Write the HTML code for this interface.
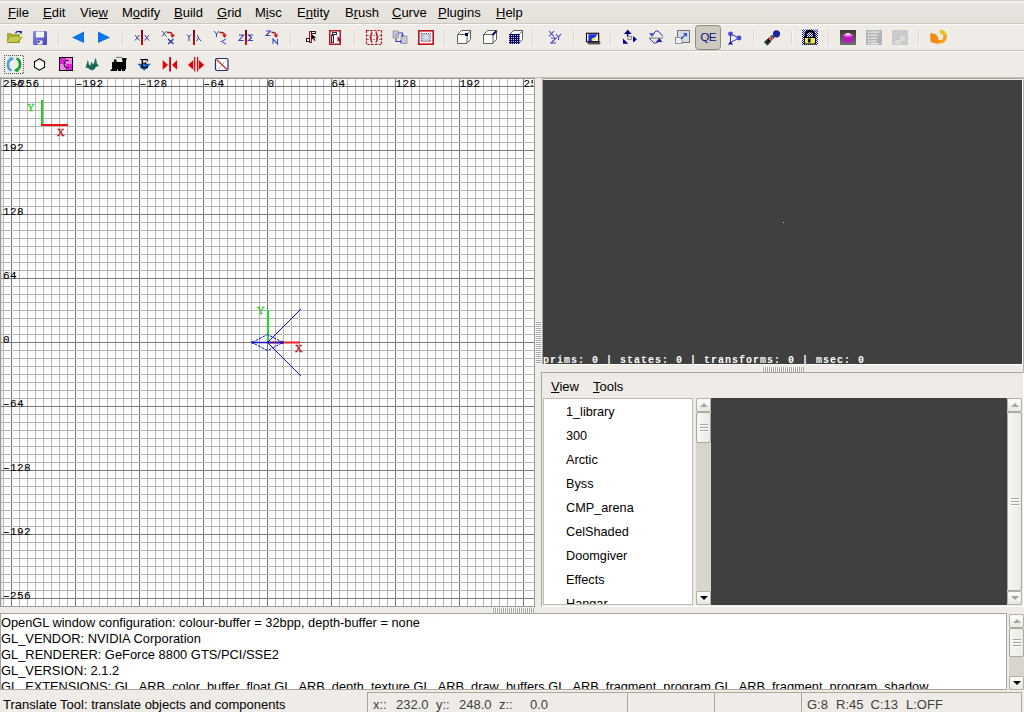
<!DOCTYPE html>
<html><head><meta charset="utf-8">
<style>
*{margin:0;padding:0;box-sizing:border-box}
html,body{width:1024px;height:712px;overflow:hidden;background:#efece8;font-family:"Liberation Sans",sans-serif;font-size:13px;color:#000}
.a{position:absolute}
.gl{position:absolute;font-family:"Liberation Mono",monospace;-webkit-text-stroke:0.1px #000;font-size:11px;letter-spacing:0.4px;line-height:10px;color:#000;white-space:pre}
.mi{position:absolute;top:5px;font-size:13px;line-height:16px;white-space:pre}
.u{text-decoration:underline}
.sep{position:absolute;top:30px;width:1px;height:15px;background:#c9c5bb;border-right:1px solid #fff}
.tl{position:absolute;left:566px;font-size:12.7px;line-height:16px}
.cl{position:absolute;left:0px;font-size:12.9px;line-height:16px;white-space:pre}
.sb{position:absolute;background:linear-gradient(#fdfdfb,#e9e7e1);border:1px solid #b3b0a8;border-radius:2px}
.sl{position:absolute;background:linear-gradient(90deg,#f7f6f2,#ebe9e3);border:1px solid #a9a69e;border-radius:2px}
.st{position:absolute;top:698px;font-size:13px;line-height:14px;white-space:pre;color:#404040}
</style></head><body>
<!-- menubar -->
<div class="a" style="left:0;top:0;width:1024px;height:23px;background:linear-gradient(#e9e6e1,#e4e1db)"></div>
<div class="a" style="left:0;top:0;width:1024px;height:1px;background:#d6d3cc"></div>
<div class="a" style="left:0;top:1px;width:1024px;height:2px;background:#f3f1ed"></div>
<div class="a" style="left:0;top:23px;width:1024px;height:1px;background:#cdc9c2"></div>
<div class="a" style="left:0;top:24px;width:1024px;height:1px;background:#fcfbf9"></div>
<div class="mi" style="left:8px"><span class="u">F</span>ile</div>
<div class="mi" style="left:43px"><span class="u">E</span>dit</div>
<div class="mi" style="left:80px">Vie<span class="u">w</span></div>
<div class="mi" style="left:122px">M<span class="u">o</span>dify</div>
<div class="mi" style="left:174px"><span class="u">B</span>uild</div>
<div class="mi" style="left:217px"><span class="u">G</span>rid</div>
<div class="mi" style="left:255px">M<span class="u">i</span>sc</div>
<div class="mi" style="left:297px">E<span class="u">n</span>tity</div>
<div class="mi" style="left:345px">B<span class="u">r</span>ush</div>
<div class="mi" style="left:392px"><span class="u">C</span>urve</div>
<div class="mi" style="left:438px"><span class="u">P</span>lugins</div>
<div class="mi" style="left:496px"><span class="u">H</span>elp</div>
<!-- toolbar lines -->
<div class="a" style="left:0;top:50px;width:1024px;height:1px;background:#c4c1ba"></div>
<div class="a" style="left:0;top:51px;width:1024px;height:1px;background:#fcfbf9"></div>
<div class="a" style="left:0;top:77px;width:1024px;height:1px;background:#c4c1b9"></div>
<!-- GRID -->
<div class="a" style="left:0;top:78px;width:535px;height:529px;background:#fff;border:1px solid #999"></div>
<div class="a" style="left:1px;top:79px;width:1px;height:527px;background:#dcdcdc"></div>
<svg class="a" style="left:0;top:0" width="1024" height="712" viewBox="0 0 1024 712" shape-rendering="crispEdges">
<rect x="3" y="79" width="1" height="527" fill="#b6b6b6"/>
<rect x="11" y="79" width="1" height="527" fill="#7a7a7a"/>
<rect x="19" y="79" width="1" height="527" fill="#b6b6b6"/>
<rect x="27" y="79" width="1" height="527" fill="#b6b6b6"/>
<rect x="35" y="79" width="1" height="527" fill="#b6b6b6"/>
<rect x="43" y="79" width="1" height="527" fill="#b6b6b6"/>
<rect x="51" y="79" width="1" height="527" fill="#b6b6b6"/>
<rect x="59" y="79" width="1" height="527" fill="#b6b6b6"/>
<rect x="67" y="79" width="1" height="527" fill="#b6b6b6"/>
<rect x="75" y="79" width="1" height="527" fill="#7a7a7a"/>
<rect x="83" y="79" width="1" height="527" fill="#b6b6b6"/>
<rect x="91" y="79" width="1" height="527" fill="#b6b6b6"/>
<rect x="99" y="79" width="1" height="527" fill="#b6b6b6"/>
<rect x="107" y="79" width="1" height="527" fill="#b6b6b6"/>
<rect x="115" y="79" width="1" height="527" fill="#b6b6b6"/>
<rect x="123" y="79" width="1" height="527" fill="#b6b6b6"/>
<rect x="131" y="79" width="1" height="527" fill="#b6b6b6"/>
<rect x="139" y="79" width="1" height="527" fill="#7a7a7a"/>
<rect x="147" y="79" width="1" height="527" fill="#b6b6b6"/>
<rect x="155" y="79" width="1" height="527" fill="#b6b6b6"/>
<rect x="163" y="79" width="1" height="527" fill="#b6b6b6"/>
<rect x="171" y="79" width="1" height="527" fill="#b6b6b6"/>
<rect x="179" y="79" width="1" height="527" fill="#b6b6b6"/>
<rect x="187" y="79" width="1" height="527" fill="#b6b6b6"/>
<rect x="195" y="79" width="1" height="527" fill="#b6b6b6"/>
<rect x="203" y="79" width="1" height="527" fill="#7a7a7a"/>
<rect x="211" y="79" width="1" height="527" fill="#b6b6b6"/>
<rect x="219" y="79" width="1" height="527" fill="#b6b6b6"/>
<rect x="227" y="79" width="1" height="527" fill="#b6b6b6"/>
<rect x="235" y="79" width="1" height="527" fill="#b6b6b6"/>
<rect x="243" y="79" width="1" height="527" fill="#b6b6b6"/>
<rect x="251" y="79" width="1" height="527" fill="#b6b6b6"/>
<rect x="259" y="79" width="1" height="527" fill="#b6b6b6"/>
<rect x="267" y="79" width="1" height="527" fill="#7a7a7a"/>
<rect x="275" y="79" width="1" height="527" fill="#b6b6b6"/>
<rect x="283" y="79" width="1" height="527" fill="#b6b6b6"/>
<rect x="291" y="79" width="1" height="527" fill="#b6b6b6"/>
<rect x="299" y="79" width="1" height="527" fill="#b6b6b6"/>
<rect x="307" y="79" width="1" height="527" fill="#b6b6b6"/>
<rect x="315" y="79" width="1" height="527" fill="#b6b6b6"/>
<rect x="323" y="79" width="1" height="527" fill="#b6b6b6"/>
<rect x="331" y="79" width="1" height="527" fill="#7a7a7a"/>
<rect x="339" y="79" width="1" height="527" fill="#b6b6b6"/>
<rect x="347" y="79" width="1" height="527" fill="#b6b6b6"/>
<rect x="355" y="79" width="1" height="527" fill="#b6b6b6"/>
<rect x="363" y="79" width="1" height="527" fill="#b6b6b6"/>
<rect x="371" y="79" width="1" height="527" fill="#b6b6b6"/>
<rect x="379" y="79" width="1" height="527" fill="#b6b6b6"/>
<rect x="387" y="79" width="1" height="527" fill="#b6b6b6"/>
<rect x="395" y="79" width="1" height="527" fill="#7a7a7a"/>
<rect x="403" y="79" width="1" height="527" fill="#b6b6b6"/>
<rect x="411" y="79" width="1" height="527" fill="#b6b6b6"/>
<rect x="419" y="79" width="1" height="527" fill="#b6b6b6"/>
<rect x="427" y="79" width="1" height="527" fill="#b6b6b6"/>
<rect x="435" y="79" width="1" height="527" fill="#b6b6b6"/>
<rect x="443" y="79" width="1" height="527" fill="#b6b6b6"/>
<rect x="451" y="79" width="1" height="527" fill="#b6b6b6"/>
<rect x="459" y="79" width="1" height="527" fill="#7a7a7a"/>
<rect x="467" y="79" width="1" height="527" fill="#b6b6b6"/>
<rect x="475" y="79" width="1" height="527" fill="#b6b6b6"/>
<rect x="483" y="79" width="1" height="527" fill="#b6b6b6"/>
<rect x="491" y="79" width="1" height="527" fill="#b6b6b6"/>
<rect x="499" y="79" width="1" height="527" fill="#b6b6b6"/>
<rect x="507" y="79" width="1" height="527" fill="#b6b6b6"/>
<rect x="515" y="79" width="1" height="527" fill="#b6b6b6"/>
<rect x="523" y="79" width="1" height="527" fill="#7a7a7a"/>
<rect x="1" y="86" width="533" height="1" fill="#7a7a7a"/>
<rect x="1" y="94" width="533" height="1" fill="#b6b6b6"/>
<rect x="1" y="102" width="533" height="1" fill="#b6b6b6"/>
<rect x="1" y="110" width="533" height="1" fill="#b6b6b6"/>
<rect x="1" y="118" width="533" height="1" fill="#b6b6b6"/>
<rect x="1" y="126" width="533" height="1" fill="#b6b6b6"/>
<rect x="1" y="134" width="533" height="1" fill="#b6b6b6"/>
<rect x="1" y="142" width="533" height="1" fill="#b6b6b6"/>
<rect x="1" y="150" width="533" height="1" fill="#7a7a7a"/>
<rect x="1" y="158" width="533" height="1" fill="#b6b6b6"/>
<rect x="1" y="166" width="533" height="1" fill="#b6b6b6"/>
<rect x="1" y="174" width="533" height="1" fill="#b6b6b6"/>
<rect x="1" y="182" width="533" height="1" fill="#b6b6b6"/>
<rect x="1" y="190" width="533" height="1" fill="#b6b6b6"/>
<rect x="1" y="198" width="533" height="1" fill="#b6b6b6"/>
<rect x="1" y="206" width="533" height="1" fill="#b6b6b6"/>
<rect x="1" y="214" width="533" height="1" fill="#7a7a7a"/>
<rect x="1" y="222" width="533" height="1" fill="#b6b6b6"/>
<rect x="1" y="230" width="533" height="1" fill="#b6b6b6"/>
<rect x="1" y="238" width="533" height="1" fill="#b6b6b6"/>
<rect x="1" y="246" width="533" height="1" fill="#b6b6b6"/>
<rect x="1" y="254" width="533" height="1" fill="#b6b6b6"/>
<rect x="1" y="262" width="533" height="1" fill="#b6b6b6"/>
<rect x="1" y="270" width="533" height="1" fill="#b6b6b6"/>
<rect x="1" y="278" width="533" height="1" fill="#7a7a7a"/>
<rect x="1" y="286" width="533" height="1" fill="#b6b6b6"/>
<rect x="1" y="294" width="533" height="1" fill="#b6b6b6"/>
<rect x="1" y="302" width="533" height="1" fill="#b6b6b6"/>
<rect x="1" y="310" width="533" height="1" fill="#b6b6b6"/>
<rect x="1" y="318" width="533" height="1" fill="#b6b6b6"/>
<rect x="1" y="326" width="533" height="1" fill="#b6b6b6"/>
<rect x="1" y="334" width="533" height="1" fill="#b6b6b6"/>
<rect x="1" y="342" width="533" height="1" fill="#7a7a7a"/>
<rect x="1" y="350" width="533" height="1" fill="#b6b6b6"/>
<rect x="1" y="358" width="533" height="1" fill="#b6b6b6"/>
<rect x="1" y="366" width="533" height="1" fill="#b6b6b6"/>
<rect x="1" y="374" width="533" height="1" fill="#b6b6b6"/>
<rect x="1" y="382" width="533" height="1" fill="#b6b6b6"/>
<rect x="1" y="390" width="533" height="1" fill="#b6b6b6"/>
<rect x="1" y="398" width="533" height="1" fill="#b6b6b6"/>
<rect x="1" y="406" width="533" height="1" fill="#7a7a7a"/>
<rect x="1" y="414" width="533" height="1" fill="#b6b6b6"/>
<rect x="1" y="422" width="533" height="1" fill="#b6b6b6"/>
<rect x="1" y="430" width="533" height="1" fill="#b6b6b6"/>
<rect x="1" y="438" width="533" height="1" fill="#b6b6b6"/>
<rect x="1" y="446" width="533" height="1" fill="#b6b6b6"/>
<rect x="1" y="454" width="533" height="1" fill="#b6b6b6"/>
<rect x="1" y="462" width="533" height="1" fill="#b6b6b6"/>
<rect x="1" y="470" width="533" height="1" fill="#7a7a7a"/>
<rect x="1" y="478" width="533" height="1" fill="#b6b6b6"/>
<rect x="1" y="486" width="533" height="1" fill="#b6b6b6"/>
<rect x="1" y="494" width="533" height="1" fill="#b6b6b6"/>
<rect x="1" y="502" width="533" height="1" fill="#b6b6b6"/>
<rect x="1" y="510" width="533" height="1" fill="#b6b6b6"/>
<rect x="1" y="518" width="533" height="1" fill="#b6b6b6"/>
<rect x="1" y="526" width="533" height="1" fill="#b6b6b6"/>
<rect x="1" y="534" width="533" height="1" fill="#7a7a7a"/>
<rect x="1" y="542" width="533" height="1" fill="#b6b6b6"/>
<rect x="1" y="550" width="533" height="1" fill="#b6b6b6"/>
<rect x="1" y="558" width="533" height="1" fill="#b6b6b6"/>
<rect x="1" y="566" width="533" height="1" fill="#b6b6b6"/>
<rect x="1" y="574" width="533" height="1" fill="#b6b6b6"/>
<rect x="1" y="582" width="533" height="1" fill="#b6b6b6"/>
<rect x="1" y="590" width="533" height="1" fill="#b6b6b6"/>
<rect x="1" y="598" width="533" height="1" fill="#7a7a7a"/>
</svg>
<div class="a" style="left:0;top:0;width:533px;height:606px;overflow:hidden">
<div class="gl" style="left:11.5px;top:79px">–256</div>
<div class="gl" style="left:75.5px;top:79px">–192</div>
<div class="gl" style="left:139.5px;top:79px">–128</div>
<div class="gl" style="left:203.5px;top:79px">–64</div>
<div class="gl" style="left:267.5px;top:79px">0</div>
<div class="gl" style="left:331.5px;top:79px">64</div>
<div class="gl" style="left:395.5px;top:79px">128</div>
<div class="gl" style="left:459.5px;top:79px">192</div>
<div class="gl" style="left:523.5px;top:79px">256</div>
<div class="gl" style="left:3px;top:79px">256</div>
<div class="gl" style="left:3px;top:143px">192</div>
<div class="gl" style="left:3px;top:207px">128</div>
<div class="gl" style="left:3px;top:271px">64</div>
<div class="gl" style="left:3px;top:335px">0</div>
<div class="gl" style="left:3px;top:399px">–64</div>
<div class="gl" style="left:3px;top:463px">–128</div>
<div class="gl" style="left:3px;top:527px">–192</div>
<div class="gl" style="left:3px;top:591px">–256</div>
<svg class="a" style="left:0;top:0" width="535" height="607" viewBox="0 0 535 607">
<rect x="41" y="100" width="2" height="25" fill="#22cc22"/>
<rect x="41" y="124" width="27" height="2" fill="#ee1111"/>
<rect x="267" y="310" width="2" height="32" fill="#22dd22"/>
<rect x="267" y="341.5" width="33" height="2" fill="#ee2222"/>
<g fill="none" stroke="#1010d0" stroke-width="1">
<path d="M252 342.5 L267.5 334.5 L283 342.5 L267.5 350.5 Z" stroke-dasharray="3 1"/>
<path d="M267.5 342.5 L301 309 M267.5 342.5 L301 376"/>
</g>
<path d="M252 342.5 L283 342.5" stroke="#1010c0" stroke-width="1.5"/>
<circle cx="252.5" cy="342.5" r="1.3" fill="#1010c0"/>
<circle cx="282.5" cy="342.5" r="1.3" fill="#1010c0"/>
</svg>
<div class="gl" style="left:27px;top:103px;color:#22cc22;font-family:'Liberation Serif',serif;font-size:10.5px;-webkit-text-stroke:0.3px currentColor">Y</div>
<div class="gl" style="left:57px;top:128px;color:#c01010;font-family:'Liberation Serif',serif;font-size:10.5px;-webkit-text-stroke:0.3px currentColor">X</div>
<div class="gl" style="left:257px;top:306px;color:#22cc22;font-family:'Liberation Serif',serif;font-size:10.5px;-webkit-text-stroke:0.3px currentColor">Y</div>
<div class="gl" style="left:295px;top:344px;color:#c01010;font-family:'Liberation Serif',serif;font-size:10.5px;-webkit-text-stroke:0.3px currentColor">X</div>

</div>
<!-- 3D view -->
<div class="a" style="left:542px;top:78px;width:481px;height:287px;border-top:1px solid #a8a59d;border-left:1px solid #a8a59d;border-right:1px solid #fff;border-bottom:1px solid #fff"></div>
<div class="a" style="left:543px;top:80px;width:479px;height:284px;background:#404040"></div>

<svg class="a" style="left:0;top:0" width="1024" height="80" viewBox="0 0 1024 80">
<defs>
<linearGradient id="rb" x1="0" y1="0" x2="0" y2="1"><stop offset="0" stop-color="#700010"/><stop offset="1" stop-color="#d01010"/></linearGradient>
<linearGradient id="fl" x1="0" y1="0" x2="1" y2="1"><stop offset="0" stop-color="#8c8ce8"/><stop offset="1" stop-color="#4646b0"/></linearGradient>
<linearGradient id="mon" x1="0" y1="0" x2="1" y2="1"><stop offset="0" stop-color="#1030e0"/><stop offset="0.55" stop-color="#3050e8"/><stop offset="0.6" stop-color="#f0f040"/><stop offset="1" stop-color="#f0f0e0"/></linearGradient>
<linearGradient id="pur" x1="0" y1="0" x2="0" y2="1"><stop offset="0" stop-color="#3a3a3a"/><stop offset="1" stop-color="#707070"/></linearGradient>
<pattern id="chk" width="2" height="2" patternUnits="userSpaceOnUse"><rect width="2" height="2" fill="#fff"/><rect width="1" height="1" fill="#1010c0"/><rect x="1" y="1" width="1" height="1" fill="#1010c0"/></pattern>
<pattern id="dots" width="2" height="2" patternUnits="userSpaceOnUse"><rect width="2" height="2" fill="#000060"/><rect x="1" y="1" width="1" height="1" fill="#d0d0ff"/></pattern>
</defs>
<!-- open folder -->
<path d="M7 33 h4 l1 1 h7 v2 h-12 z" fill="#b0b040"/>
<path d="M7 34 h13 v9 h-13 z" fill="#a8a838"/>
<path d="M10 37 h12 l-4 6 h-11 z" fill="#c8c850"/>
<path d="M7.5 42.5 h10.5 l4 -6" fill="none" stroke="#8a8a20" stroke-width="1"/>
<path d="M15.5 33 q2.5 -3 5 -0.5" fill="none" stroke="#202a90" stroke-width="1.3"/>
<path d="M19 31 l3 0 l-0.5 3.5 z" fill="#1020a0"/>
<!-- save -->
<rect x="33" y="31" width="14" height="14" rx="1" fill="url(#fl)"/>
<rect x="36" y="31.5" width="8" height="6" fill="#f4f6ea"/>
<rect x="37.5" y="40.5" width="5" height="4" fill="#e8e8f4"/>
<rect x="38" y="41" width="1.5" height="1.5" fill="#000"/>
<!-- separator -->
<rect x="58" y="30" width="1" height="15" fill="#dcd8d0"/><rect x="59" y="30" width="1" height="15" fill="#f7f6f3"/>
<!-- back/forward -->
<path d="M72 37.5 L84 31.5 L84 43 Z" fill="#0a74ea"/>
<path d="M110 37.5 L98 31.5 L98 43 Z" fill="#0a74ea"/>
<rect x="122" y="30" width="1" height="15" fill="#dcd8d0"/><rect x="123" y="30" width="1" height="15" fill="#f7f6f3"/>
<!-- flip x -->
<g fill="none" stroke="#3040a0" stroke-width="1">
<path d="M135 35 l4.5 5.5 M139.5 35 l-4.5 5.5 M144.5 35 l4.5 5.5 M149 35 l-4.5 5.5"/>
</g>
<rect x="141" y="30" width="2" height="15" fill="url(#rb)"/>
<!-- rotate x -->
<g fill="none" stroke="#3848b0" stroke-width="1">
<path d="M162 31 l4.5 5.5 M166.5 31 l-4.5 5.5"/>
<path d="M168 39 l5.5 5 M173.5 39 l-5.5 5" stroke="#2030a0" stroke-width="1.2"/>
</g>
<path d="M167 32.5 h3 q2 0 2.5 2" fill="none" stroke="#b01010" stroke-width="1.4"/>
<path d="M170 34.5 h5 l-2.5 3.5 z" fill="#d01010"/>
<!-- flip y -->
<g fill="none" stroke="#3040a0" stroke-width="1">
<path d="M187 34.5 l2 2.5 l2 -2.5 M189 37 v4"/>
<path d="M196.5 41 l2 -3 l2.5 3 M198.5 38 l-1 -3"/>
</g>
<rect x="193" y="30" width="2" height="15" fill="url(#rb)"/>
<!-- rotate y -->
<g fill="none" stroke="#3848b0" stroke-width="1">
<path d="M214 31 l2.5 3 l2.5 -3 M216.5 34 v3"/>
<path d="M226 39 l-4.5 2.5 l4.5 2.5 M221.5 41.5 h-1"/>
</g>
<path d="M219.5 32.5 h2.5 q2 0 2.5 2" fill="none" stroke="#b01010" stroke-width="1.4"/>
<path d="M222 34.5 h5 l-2.5 3.5 z" fill="#d01010"/>
<!-- flip z -->
<g fill="none" stroke="#3040b0" stroke-width="1.1">
<path d="M239 35 h4.5 l-4.5 5.5 h4.5"/>
<path d="M253 35 h-4.5 l3 2.75 l-3 2.75 h4.5"/>
</g>
<rect x="245" y="30" width="2" height="15" fill="url(#rb)"/>
<!-- rotate z -->
<g fill="none" stroke="#3848c0" stroke-width="1.1">
<path d="M266 31 h4.5 l-4.5 4.5 h4.5"/>
<path d="M273 44 v-5 l4.5 5 v-5"/>
</g>
<path d="M271.5 32.5 h2 q2 0 2.5 2" fill="none" stroke="#b01010" stroke-width="1.4"/>
<path d="M273.5 34.5 h5 l-2.5 3.5 z" fill="#d01010"/>
<rect x="290" y="30" width="1" height="15" fill="#dcd8d0"/><rect x="291" y="30" width="1" height="15" fill="#f7f6f3"/>
<!-- select touching -->
<rect x="309.5" y="31.5" width="2" height="11" fill="#f0c0c8" stroke="#b01828" stroke-width="1"/>
<rect x="306.5" y="38.5" width="3" height="3" fill="#fff" stroke="#202020" stroke-width="1"/>
<rect x="311.5" y="31.5" width="4" height="2" fill="#fff" stroke="#202020" stroke-width="1"/>
<path d="M311.5 34 l0 6 l1.5 -1.5 l1.5 2.5 l1 -0.6 l-1.4 -2.4 l2 -0.3 z" fill="#101010"/>
<!-- select inside -->
<rect x="329.75" y="30.75" width="10.5" height="13.5" fill="#fff" stroke="#b01828" stroke-width="1.5"/>
<rect x="331.5" y="35" width="2" height="7.5" fill="#e0e0f0" stroke="#303040" stroke-width="1"/>
<rect x="332.5" y="32.5" width="4" height="2" fill="#fff" stroke="#303040" stroke-width="1"/>
<path d="M337.5 36 l0 6 l1.2 -1.2 l1.2 2 l1 -0.6 l-1.2 -2 l1.8 -0.2 z" fill="#a01020"/>
<rect x="354" y="30" width="1" height="15" fill="#dcd8d0"/><rect x="355" y="30" width="1" height="15" fill="#f7f6f3"/>
<!-- hollow -->
<g fill="none">
<path d="M371.5 31 v13 M376.5 31 v13 M367 35.5 h14 M367 39.5 h14" stroke="#8a8a8a" stroke-width="1" stroke-dasharray="2 1"/>
<rect x="366.5" y="30.5" width="15" height="14" stroke="#c81020" stroke-width="1.2" stroke-dasharray="2.5 1.2"/>
<path d="M372.5 33 q-1.5 0 -1.5 1.5 v1.5 l-0.8 1.5 l0.8 1.5 v1.5 q0 1.5 1.5 1.5 M375.5 33 q1.5 0 1.5 1.5 v1.5 l0.8 1.5 l-0.8 1.5 v1.5 q0 1.5 -1.5 1.5" stroke="#c01020" stroke-width="1.3"/>
</g>
<!-- csg merge -->
<rect x="393" y="31" width="5.5" height="7" fill="#c4c4d0" stroke="#9090a8" stroke-width="0.8"/>
<path d="M394.5 35 l1.2 1.2 l2 -3" stroke="#707080" stroke-width="0.7" fill="none"/>
<rect x="401" y="36" width="6" height="7.5" fill="#c8c8d4" stroke="#9090a8" stroke-width="0.8"/>
<path d="M398.5 33 h4 v2.5 M396 38.5 v3 h4.5" fill="none" stroke="#3838d0" stroke-width="1.2"/>
<path d="M401 35 h3 l-1.5 2 z M400 40 v3 l2 -1.5 z" fill="#3838d0"/>
<!-- make room -->
<defs><radialGradient id="mr"><stop offset="0" stop-color="#e4ecf6"/><stop offset="1" stop-color="#b0c4dc"/></radialGradient></defs>
<rect x="418.8" y="30.8" width="14.4" height="13.4" fill="#f4f4f4" stroke="#c01020" stroke-width="1.6"/>
<rect x="422" y="34" width="8" height="7" fill="url(#mr)"/>
<rect x="421.5" y="33.5" width="9" height="8" fill="none" stroke="#a01020" stroke-width="0.9" stroke-dasharray="1 1.2"/>
<rect x="444" y="30" width="1" height="15" fill="#dcd8d0"/><rect x="445" y="30" width="1" height="15" fill="#f7f6f3"/>
<!-- cubes -->
<g fill="#fff" stroke="#606060" stroke-width="1">
<path d="M457.5 34.5 h9.5 v9 h-9.5 z M457.5 34.5 l4 -4 h9 v9 l-4 4 M467 34.5 l4 -4"/>
<path d="M483.5 34.5 h9.5 v9 h-9.5 z M483.5 34.5 l4 -4 h9 v9 l-4 4 M493 34.5 l4 -4"/>
<path d="M509.5 34.5 h9.5 v9 h-9.5 z M509.5 34.5 l4 -4 h9 v9 l-4 4 M519 34.5 l4 -4"/>
</g>
<rect x="465" y="33" width="3" height="3" fill="#000070"/>
<path d="M492.5 35 l4 -4" stroke="#000070" stroke-width="2"/>
<rect x="509" y="34" width="10.5" height="10" fill="url(#dots)"/>
<rect x="532" y="30" width="1" height="15" fill="#dcd8d0"/><rect x="533" y="30" width="1" height="15" fill="#f7f6f3"/>
<!-- xzy -->
<g fill="none" stroke="#4040c0" stroke-width="1.1">
<path d="M549 31 l5 5.5 M554 31 l-5 5.5"/>
<path d="M556 34 l2.5 3 l2.5 -3 M558.5 37 v3"/>
<path d="M551 38 h5 l-5 5 h5"/>
</g>
<rect x="573" y="30" width="1" height="15" fill="#dcd8d0"/><rect x="574" y="30" width="1" height="15" fill="#f7f6f3"/>
<!-- monitor -->
<rect x="586.5" y="33.3" width="12.2" height="8.4" fill="#fff" stroke="#101010" stroke-width="1.2"/>
<path d="M588 34.2 h10 l-6 6.8 h-4 z" fill="#1a2ee0"/>
<path d="M592 41 l6 -6.8 v6.8 z" fill="#eef0e0"/>
<ellipse cx="593.5" cy="39.2" rx="2.2" ry="1.3" fill="#e8ec40" transform="rotate(-30 593.5 39.2)"/>
<path d="M588 34 v6.8" stroke="#e8eef8" stroke-width="0.9"/>
<rect x="588" y="42.2" width="12" height="1.6" rx="0.6" fill="none" stroke="#101010" stroke-width="1"/>
<rect x="610" y="30" width="1" height="15" fill="#dcd8d0"/><rect x="611" y="30" width="1" height="15" fill="#f7f6f3"/>
<!-- translate -->
<g fill="#000080">
<path d="M624 34 l3.8 -4.5 l3.8 4.5 z"/>
<rect x="627" y="33" width="1.4" height="4"/>
<path d="M633 36 l4 3.3 l-4 3.3 z"/>
<path d="M623 38.5 v5.3 h5.3 z"/>
</g>
<rect x="627.8" y="36.3" width="3.6" height="3" fill="#e8e8e0" stroke="#808080" stroke-width="0.9"/>
<!-- rotate -->
<g fill="none" stroke="#3030c0" stroke-width="1">
<path d="M652 35 l4 -4 h2 l5 5.5"/>
<path d="M660 41 l-4 2 h-2 l-5 -5"/>
</g>
<rect x="649" y="37.5" width="14" height="1.3" fill="#909090"/>
<path d="M649 33 l6 0 l-3 4 z" fill="#5050d8"/>
<path d="M656 42 l6.5 0 l-3.25 -4 z" fill="#2020b0"/>
<!-- scale -->
<rect x="677.5" y="30.5" width="12" height="12" fill="#d8dce8" stroke="#707070" stroke-width="1"/>
<rect x="675.5" y="37.5" width="6.5" height="6" fill="#f0f0f0" stroke="#909090" stroke-width="1"/>
<path d="M681 39 l5 -5" stroke="#3050d0" stroke-width="1.3"/>
<path d="M683 33 h4 v4 z" fill="#3050d0"/>
<!-- QE pressed -->
<rect x="695.5" y="25.5" width="25" height="24" rx="3" fill="#cdc9bd" stroke="#8e8b83" stroke-width="1"/>
<text x="700.3" y="41" font-family="Liberation Sans" font-size="11.8" fill="#10108a" letter-spacing="-0.6">QE</text>
<!-- bone -->
<g stroke="#3030c0" stroke-width="1" fill="none"><path d="M730.5 34 L730.5 42.5 L739 38 M730.5 34 L739 38"/></g>
<circle cx="730.5" cy="33.8" r="2.4" fill="#4848d0"/>
<circle cx="739" cy="38" r="2.4" fill="#4848d0"/>
<path d="M727.8 44.5 l2.7 -3.2 l2.7 3.2 z" fill="#1818a0"/>
<rect x="753" y="30" width="1" height="15" fill="#dcd8d0"/><rect x="754" y="30" width="1" height="15" fill="#f7f6f3"/>
<!-- key/camera -->
<path d="M764 42 l8 -7 l2.5 2.5 l-7 8 z" fill="#101010"/>
<path d="M764.5 43.5 l3 -3 M766 45 l3 -3" stroke="#40a060" stroke-width="0.8"/>
<circle cx="776.5" cy="33.8" r="3.6" fill="#20209a"/>
<circle cx="771.3" cy="38.7" r="1.8" fill="#e02020" stroke="#fff" stroke-width="0.6"/>
<rect x="791" y="30" width="1" height="15" fill="#dcd8d0"/><rect x="792" y="30" width="1" height="15" fill="#f7f6f3"/>
<!-- lock -->
<rect x="802" y="29.5" width="16" height="15.5" fill="url(#chk)"/>
<path d="M805.8 38 v-3 q0 -4 4.2 -4 q4.2 0 4.2 4 v3" fill="none" stroke="#000" stroke-width="2.4"/>
<rect x="804.5" y="37.5" width="11" height="6.5" fill="#e8e840" stroke="#000" stroke-width="1"/>
<rect x="808" y="38.5" width="2.5" height="4" fill="#000"/>
<rect x="828" y="30" width="1" height="15" fill="#dcd8d0"/><rect x="829" y="30" width="1" height="15" fill="#f7f6f3"/>
<!-- purple -->
<rect x="840" y="30" width="16" height="15" fill="url(#pur)"/>
<path d="M843.5 35 v6 q4.5 3 9 0 v-6 z" fill="#c010c0"/>
<ellipse cx="848" cy="35" rx="4.5" ry="1.8" fill="#f070f0"/>
<rect x="846.5" y="33" width="3" height="2" fill="#fff" opacity="0.9"/>
<!-- list gray -->
<rect x="866" y="30" width="16" height="15" rx="1" fill="#b4b4b4"/>
<g fill="#f0f0f0"><rect x="868" y="31.5" width="1.5" height="1.5"/><rect x="870.5" y="31.5" width="9" height="1.2"/>
<rect x="868" y="34.5" width="1.5" height="1.5"/><rect x="870.5" y="34.5" width="7" height="1.2"/>
<rect x="868" y="37.5" width="1.5" height="1.5"/><rect x="870.5" y="37.5" width="6" height="1.2"/>
<rect x="868" y="40.5" width="1.5" height="1.5"/><rect x="870.5" y="40.5" width="6" height="1.2"/>
<rect x="868" y="43" width="1.5" height="1.2"/><rect x="870.5" y="43" width="8" height="1.2"/></g>
<!-- disabled -->
<rect x="892" y="30" width="16" height="15" rx="1" fill="#cacaca"/>
<path d="M895 40 h5 v-4 h5 v5 h-4 v3 h-6 z" fill="#dcdcdc"/>
<rect x="918" y="30" width="1" height="15" fill="#dcd8d0"/><rect x="919" y="30" width="1" height="15" fill="#f7f6f3"/>
<!-- orange refresh -->
<path d="M940 31.5 A5 5 0 0 1 940 41.8 L936 41.8" fill="none" stroke="#f5a010" stroke-width="3.6"/>
<path d="M940 31.5 A5 5 0 0 1 944.5 35" fill="none" stroke="#e8c020" stroke-width="3.4"/>
<path d="M930.2 33 L936 34.2 L938.5 38 L938 43.5 L933 43 L931.5 41.5 L930.5 43 Z" fill="#f58a10"/>
<!-- ===== toolbar 2 ===== -->
<g shape-rendering="crispEdges" fill="#555">
<rect x="4" y="55" width="1" height="1"/><rect x="6" y="55" width="1" height="1"/><rect x="8" y="55" width="1" height="1"/><rect x="10" y="55" width="1" height="1"/><rect x="12" y="55" width="1" height="1"/><rect x="14" y="55" width="1" height="1"/><rect x="16" y="55" width="1" height="1"/><rect x="18" y="55" width="1" height="1"/><rect x="20" y="55" width="1" height="1"/><rect x="22" y="55" width="1" height="1"/>
<rect x="4" y="73" width="1" height="1"/><rect x="6" y="73" width="1" height="1"/><rect x="8" y="73" width="1" height="1"/><rect x="10" y="73" width="1" height="1"/><rect x="12" y="73" width="1" height="1"/><rect x="14" y="73" width="1" height="1"/><rect x="16" y="73" width="1" height="1"/><rect x="18" y="73" width="1" height="1"/><rect x="20" y="73" width="1" height="1"/><rect x="22" y="73" width="1" height="1"/>
<rect x="4" y="57" width="1" height="1"/><rect x="4" y="59" width="1" height="1"/><rect x="4" y="61" width="1" height="1"/><rect x="4" y="63" width="1" height="1"/><rect x="4" y="65" width="1" height="1"/><rect x="4" y="67" width="1" height="1"/><rect x="4" y="69" width="1" height="1"/><rect x="4" y="71" width="1" height="1"/>
<rect x="23" y="56" width="1" height="1"/><rect x="23" y="58" width="1" height="1"/><rect x="23" y="60" width="1" height="1"/><rect x="23" y="62" width="1" height="1"/><rect x="23" y="64" width="1" height="1"/><rect x="23" y="66" width="1" height="1"/><rect x="23" y="68" width="1" height="1"/><rect x="23" y="70" width="1" height="1"/><rect x="23" y="72" width="1" height="1"/>
</g>
<path d="M12.5 58.5 q-4.5 1 -4.5 6 q0 5 3.5 6" fill="none" stroke="#40a8e0" stroke-width="2.6"/>
<path d="M9.5 56.8 l4.5 1.7 l-3.5 3 z" fill="#40a8e0"/>
<path d="M15.5 70.5 q4.5 -1 4.5 -6 q0 -5 -3.5 -6" fill="none" stroke="#10a030" stroke-width="2.6"/>
<path d="M18.5 72.2 l-4.5 -1.7 l3.5 -3 z" fill="#10a030"/>
<path d="M39.5 58.8 l5 2.9 v5.6 l-5 2.9 l-5 -2.9 v-5.6 z" fill="#fff" stroke="#000" stroke-width="1.1"/>
<rect x="59.5" y="57.5" width="13" height="13" fill="#e020e0" stroke="#000" stroke-width="1"/>
<rect x="66" y="58" width="6" height="6" fill="#f080f0"/><rect x="60" y="64" width="6" height="6" fill="#f080f0"/>
<path d="M68.5 60.5 q-3 -1 -4 1.5 q-1 3 0.5 5 q1.5 1.5 3.5 0.5" fill="none" stroke="#000" stroke-width="1"/>
<!-- trees -->
<path d="M87.5 60 L88.8 62.5 L88.4 63.5 L89.6 65.5 L90.2 66 L91.3 61.8 L92.6 63.8 L93.4 64.2 L94.2 62.2 L95.4 58 L96.8 61.5 L96.4 62.5 L97.6 64.6 L99 66.2 L96.6 66.6 L95.6 67.6 L94.8 67.4 L95.2 69 L93.2 69.6 L92.2 70.8 L91.2 69.8 L89 69.6 L89.6 68.2 L88.2 68.6 L87.6 67.8 L85.2 67.4 L86.6 65.6 L86.2 64.8 L87.2 63 Z" fill="#0f6650"/>
<path d="M91.5 63.5 L92.2 66 L91.8 68.5 M95.4 60.5 L95.8 64" stroke="#2a8a6a" stroke-width="0.8" fill="none"/>
<!-- train -->
<g fill="#000">
<rect x="114" y="59.5" width="2.5" height="3"/>
<rect x="112" y="62" width="11" height="6"/>
<rect x="122" y="58" width="4.5" height="2"/>
<rect x="122.5" y="60" width="3.5" height="8.5"/>
<path d="M110 71 l3 -3.5 h13 v2 h-1 v1.5 h-3 v-1.5 h-1 v1.5 h-3 v-1.5 h-1 v1.5 z"/>
</g>
<rect x="116" y="56.8" width="6" height="1.2" fill="#808080"/>
<!-- E arrow -->
<path d="M137.3 63.8 h13.7 l-6.85 7 z" fill="#1068d0"/>
<path d="M140.3 59 h7.5 v2.6 h-1 v-1.3 h-3.8 v2.5 h2.2 v-0.8 h1 v3 h-1 v-0.9 h-2.2 v2.9 h3.9 v-1.5 h1 v2.8 h-7.6 v-1 h1.3 v-7.3 h-1.3 z" fill="#000"/>
<rect x="143" y="63.6" width="2.2" height="1.2" fill="#4a8ad8"/>
<!-- red arrows -->
<g fill="#e00010">
<path d="M162.7 60 l5.4 4.9 l-5.4 4.8 z"/><rect x="169.2" y="57" width="1.8" height="14.5" fill="#c00010"/><path d="M177.1 60 l-5.1 4.9 l5.1 4.8 z"/>
<path d="M193.4 60 l-5.4 4.9 l5.4 4.8 z"/><rect x="194.1" y="57" width="1.2" height="14.5"/><rect x="197" y="57" width="1.2" height="14.5"/><path d="M198.8 60 l5.4 4.9 l-5.4 4.8 z"/>
</g>
<!-- no texture -->
<rect x="215.5" y="58.5" width="12.5" height="12" rx="1.5" fill="#fff" stroke="#203070" stroke-width="1.2"/>
<path d="M216.5 59.5 l10.5 10" stroke="#c02020" stroke-width="1.1"/>
<path d="M218 69 l9 -9" stroke="#606040" stroke-width="0.9" stroke-dasharray="1 1.5"/>
</svg>

<div class="a" style="left:1023px;top:78px;width:1px;height:529px;background:#b8b5ad"></div>
<!-- vertical pane grip -->
<div class="a" style="left:536px;top:321px;width:5px;height:43px;background:repeating-linear-gradient(#fff 0 1px,#a8a59d 1px 2px)"></div>
<!-- horizontal grip 3d/tex -->
<div class="a" style="left:762px;top:367px;width:42px;height:5px;background:repeating-linear-gradient(90deg,#fff 0 1px,#a8a59d 1px 2px)"></div>
<!-- texture browser frame -->
<div class="a" style="left:541px;top:372px;width:483px;height:235px;border-top:1px solid #a8a59d;border-left:1px solid #a8a59d;border-right:1px solid #fff;border-bottom:1px solid #fff"></div>
<div class="a" style="left:551px;top:379px;font-size:13px;line-height:16px"><span class="u">V</span>iew</div>
<div class="a" style="left:593px;top:379px;font-size:13px;line-height:16px"><span class="u">T</span>ools</div>
<!-- list box -->
<div class="a" style="left:543px;top:398px;width:150px;height:207px;background:#fff;border:1px solid #bebbb3;overflow:hidden">
<div class="tl" style="left:22px;top:5px">1_library</div>
<div class="tl" style="left:22px;top:29px">300</div>
<div class="tl" style="left:22px;top:53px">Arctic</div>
<div class="tl" style="left:22px;top:77px">Byss</div>
<div class="tl" style="left:22px;top:101px">CMP_arena</div>
<div class="tl" style="left:22px;top:125px">CelShaded</div>
<div class="tl" style="left:22px;top:149px">Doomgiver</div>
<div class="tl" style="left:22px;top:173px">Effects</div>
<div class="tl" style="left:22px;top:197px">Hangar</div>
</div>
<div class="a" style="left:696px;top:398px;width:15px;height:207px;background:#d9d5cd"></div>
<div class="sb" style="left:696px;top:398px;width:15px;height:14px"></div>
<div class="a" style="left:700px;top:403px;width:0;height:0;border-left:4px solid transparent;border-right:4px solid transparent;border-bottom:4px solid #a8a59d"></div>
<div class="sb" style="left:696px;top:591px;width:15px;height:14px"></div>
<div class="a" style="left:700px;top:596px;width:0;height:0;border-left:4px solid transparent;border-right:4px solid transparent;border-top:4px solid #000"></div>
<div class="sl" style="left:696px;top:412px;width:15px;height:31px"></div>
<div class="a" style="left:700px;top:424px;width:8px;height:2px;background:#fff;border-top:1px solid #a9a69f"></div>
<div class="a" style="left:700px;top:427px;width:8px;height:2px;background:#fff;border-top:1px solid #a9a69f"></div>
<div class="a" style="left:700px;top:430px;width:8px;height:2px;background:#fff;border-top:1px solid #a9a69f"></div>
<div class="a" style="left:711px;top:398px;width:296px;height:207px;background:#404040"></div>
<div class="a" style="left:1007px;top:398px;width:15px;height:207px;background:#d9d5cd"></div>
<div class="sb" style="left:1007px;top:398px;width:15px;height:14px"></div>
<div class="a" style="left:1011px;top:403px;width:0;height:0;border-left:4px solid transparent;border-right:4px solid transparent;border-bottom:4px solid #a8a59d"></div>
<div class="sb" style="left:1007px;top:591px;width:15px;height:14px"></div>
<div class="a" style="left:1011px;top:596px;width:0;height:0;border-left:4px solid transparent;border-right:4px solid transparent;border-top:4px solid #a8a59d"></div>
<div class="sl" style="left:1007px;top:412px;width:15px;height:179px"></div>
<div class="a" style="left:1011px;top:498px;width:8px;height:2px;background:#fff;border-top:1px solid #a9a69f"></div>
<div class="a" style="left:1011px;top:501px;width:8px;height:2px;background:#fff;border-top:1px solid #a9a69f"></div>
<div class="a" style="left:1011px;top:504px;width:8px;height:2px;background:#fff;border-top:1px solid #a9a69f"></div>
<!-- console grip -->
<div class="a" style="left:492px;top:608px;width:42px;height:5px;background:repeating-linear-gradient(90deg,#fff 0 1px,#a8a59d 1px 2px)"></div>
<!-- console -->
<div class="a" style="left:0;top:613px;width:1007px;height:77px;background:#fff;border:1px solid #a8a59d;overflow:hidden">
<div class="cl" style="top:0.5px;transform:scaleX(0.993);transform-origin:0 0">OpenGL window configuration: colour-buffer = 32bpp, depth-buffer = none</div>
<div class="cl" style="top:16.5px">GL_VENDOR: NVIDIA Corporation</div>
<div class="cl" style="top:32.5px">GL_RENDERER: GeForce 8800 GTS/PCI/SSE2</div>
<div class="cl" style="top:48.5px">GL_VERSION: 2.1.2</div>
<div class="cl" style="top:64.5px;transform:scaleX(0.9915);transform-origin:0 0">GL_EXTENSIONS: GL_ARB_color_buffer_float GL_ARB_depth_texture GL_ARB_draw_buffers GL_ARB_fragment_program GL_ARB_fragment_program_shadow</div>
</div>
<div class="a" style="left:1009px;top:614px;width:15px;height:76px;background:#d9d5cd"></div>
<div class="sb" style="left:1009px;top:614px;width:15px;height:14px"></div>
<div class="a" style="left:1013px;top:619px;width:0;height:0;border-left:4px solid transparent;border-right:4px solid transparent;border-bottom:4px solid #a8a59d"></div>
<div class="sb" style="left:1009px;top:676px;width:15px;height:14px"></div>
<div class="a" style="left:1013px;top:681px;width:0;height:0;border-left:4px solid transparent;border-right:4px solid transparent;border-top:4px solid #000"></div>
<div class="sl" style="left:1009px;top:628px;width:15px;height:29px"></div>
<div class="a" style="left:1013px;top:639px;width:8px;height:2px;background:#fff;border-top:1px solid #a9a69f"></div>
<div class="a" style="left:1013px;top:642px;width:8px;height:2px;background:#fff;border-top:1px solid #a9a69f"></div>
<div class="a" style="left:1013px;top:645px;width:8px;height:2px;background:#fff;border-top:1px solid #a9a69f"></div>
<!-- status bar -->
<div class="st" style="left:3px;color:#000">Translate Tool: translate objects and components</div>
<div class="a" style="left:367px;top:692px;width:261px;height:20px;border-left:1px solid #aca899;border-top:1px solid #aca899"></div>
<div class="a" style="left:627px;top:692px;width:88px;height:20px;border-left:1px solid #aca899;border-top:1px solid #aca899"></div>
<div class="a" style="left:714px;top:692px;width:88px;height:20px;border-left:1px solid #aca899;border-top:1px solid #aca899"></div>
<div class="a" style="left:801px;top:692px;width:221px;height:20px;border-left:1px solid #aca899;border-top:1px solid #aca899;border-right:1px solid #aca899"></div>
<div class="st" style="left:373px">x::</div><div class="st" style="left:396px">232.0</div><div class="st" style="left:436px">y::</div><div class="st" style="left:459px">248.0</div><div class="st" style="left:499px">z::</div><div class="st" style="left:530px">0.0</div>
<div class="st" style="left:807px">G:8</div><div class="st" style="left:836px">R:45</div><div class="st" style="left:870.5px">C:13</div><div class="st" style="left:906px">L:OFF</div>
<!-- 3d status -->
<div class="a" style="left:543px;top:356px;font-family:'Liberation Mono',monospace;font-size:10px;font-weight:bold;letter-spacing:1px;line-height:10px;color:#fff;white-space:pre">prims: 0 | states: 0 | transforms: 0 | msec: 0</div>
<div class="a" style="left:783px;top:222px;width:1px;height:1px;background:#bbb"></div>
</body></html>
